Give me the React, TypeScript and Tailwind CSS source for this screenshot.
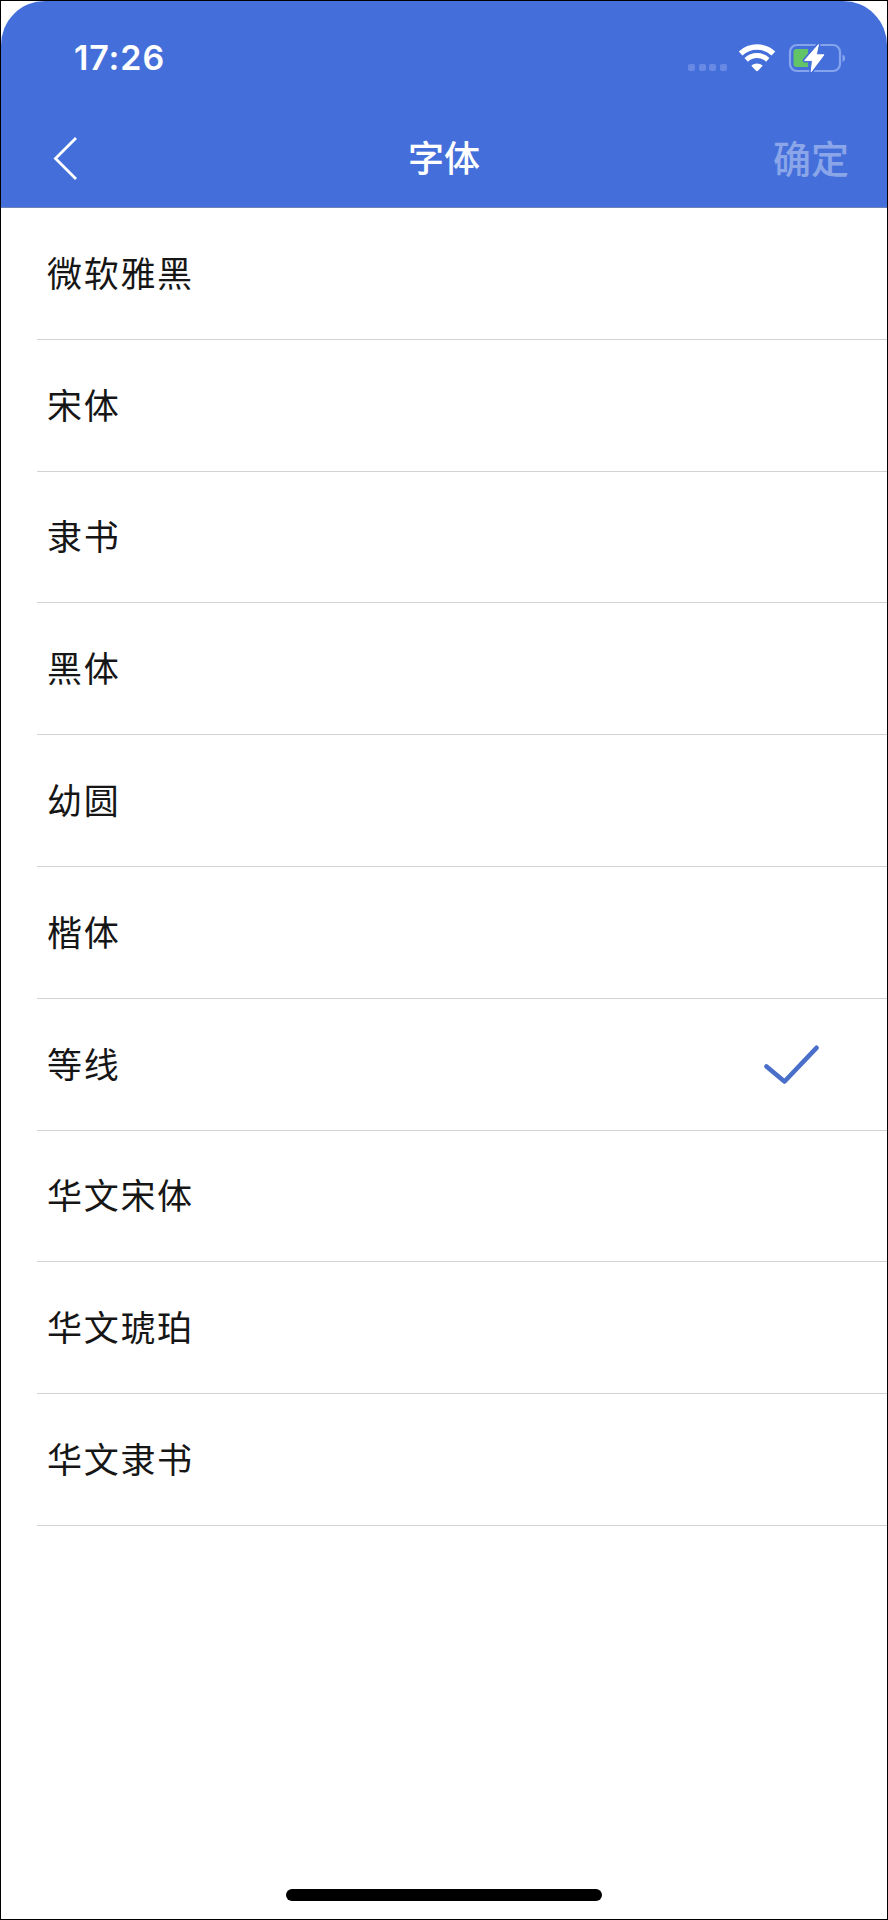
import React, { useState } from 'react';

interface FontItem {
  id: string;
  name: string;
}

const FONTS: FontItem[] = [
  { id: 'yahei', name: '微软雅黑' },
  { id: 'songti', name: '宋体' },
  { id: 'lishu', name: '隶书' },
  { id: 'heiti', name: '黑体' },
  { id: 'youyuan', name: '幼圆' },
  { id: 'kaiti', name: '楷体' },
  { id: 'dengxian', name: '等线' },
  { id: 'stsong', name: '华文宋体' },
  { id: 'sthupo', name: '华文琥珀' },
  { id: 'stliti', name: '华文隶书' },
];

const WifiIcon: React.FC = () => (
  <svg width="38" height="28" viewBox="0 0 38 28" fill="none" stroke="white">
    <path d="M2.6 9.4C12 0.8 26 0.8 35.4 9.4" strokeWidth="5.4" />
    <path d="M8.2 15.8C14.5 10.2 23.5 10.2 29.8 15.8" strokeWidth="5" />
    <path d="M13.3 21.8C16.5 18.6 21.5 18.6 24.7 21.8L20.2 26.6Q19 27.8 17.8 26.6Z" fill="white" stroke="none" />
  </svg>
);

const BatteryIcon: React.FC = () => (
  <svg width="58" height="32" viewBox="0 0 58 32">
    <rect x="2" y="3" width="50" height="26" rx="7" fill="none" stroke="#86a4ee" strokeWidth="2.2" />
    <path d="M54.5 12.5C58 14 58 18.5 54.5 20Z" fill="#86a4ee" />
    <path d="M8.5 7H20V25H8.5Q5.5 25 5.5 22V10Q5.5 7 8.5 7Z" fill="#62c466" />
    <path
      d="M30.5 2.5L16.6 18.4H24.4L23.2 29.8L36 12.8H28.3Z"
      fill="white"
      stroke="#446fda"
      strokeWidth="4"
      strokeLinejoin="round"
      paintOrder="stroke"
    />
    <path d="M30.5 2.5L16.6 18.4H24.4L23.2 29.8L36 12.8H28.3Z" fill="white" stroke="white" strokeWidth="0.8" strokeLinejoin="round" />
  </svg>
);

const StatusBar: React.FC = () => (
  <div className="flex h-[114px] items-center justify-between pl-[73px] pr-[41px]">
    <span className="font-[Inter,sans-serif] text-[34px] font-semibold leading-none tracking-[0.9px]">17:26</span>
    <div className="flex items-center">
      <div className="mr-[11px] mt-[18px] flex gap-[3.7px]">
        {[0, 1, 2, 3].map(i => (
          <div key={i} className="h-[7px] w-[7px] rounded-[2px] bg-[#688ae4]" />
        ))}
      </div>
      <WifiIcon />
      <div className="ml-3">
        <BatteryIcon />
      </div>
    </div>
  </div>
);

export default function App() {
  const [current, setCurrent] = useState('dengxian');

  return (
    <div className="flex h-[1920px] w-[888px] flex-col border border-black bg-white font-['Liberation_Sans','Noto_Sans_CJK_SC',sans-serif]">
      <header className="h-[207px] shrink-0 rounded-t-[44px] border-b border-[#6c82bb] bg-[#446fda] text-white">
        <StatusBar />
        <div className="grid h-[88px] grid-cols-[1fr_auto_1fr] items-center pl-[52px] pr-[38px]">
          <button className="-mt-[3px] justify-self-start" title="返回">
            <svg width="26" height="44" viewBox="0 0 26 44" fill="none" stroke="white" strokeWidth="2.8">
              <path d="M23 2L2.5 22.5L23 43" />
            </svg>
          </button>
          <h1 className="-ml-3.5 mt-0.5 whitespace-nowrap text-center text-[36px] font-medium">字体</h1>
          <button className="mt-[3px] justify-self-end whitespace-nowrap text-[38px] font-medium text-[#8aa6e9]">确定</button>
        </div>
      </header>

      <ul className="flex-1 pl-9">
        {FONTS.map(font => (
          <li
            key={font.id}
            onClick={() => setCurrent(font.id)}
            className="flex h-[131.8px] items-center justify-between border-b border-[#d2d2d4] pl-2.5 pr-[68px] pt-0.5"
          >
            <span className="text-[35px] leading-none tracking-[1.7px] text-[#161616]">{font.name}</span>
            {current === font.id && (
              <svg width="56" height="40" viewBox="0 0 56 40" fill="none" stroke="#4a6fc8" strokeWidth="4.6" strokeLinecap="round" strokeLinejoin="round">
                <path d="M3.5 21.5L21.5 36.5L53.5 2.8" />
              </svg>
            )}
          </li>
        ))}
      </ul>

      {/* Home indicator */}
      <div className="mx-auto mb-[18px] h-[12px] w-[316px] rounded-full bg-black" />
    </div>
  );
}
